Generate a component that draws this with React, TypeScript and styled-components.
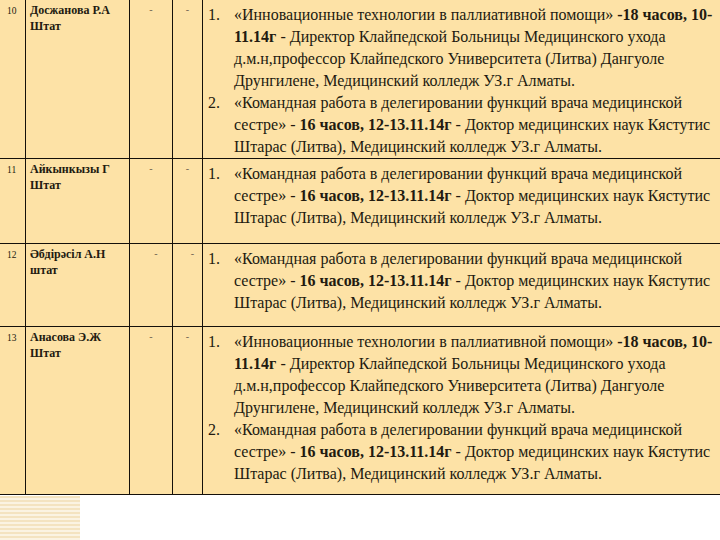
import React from 'react';
import styled, { createGlobalStyle } from 'styled-components';

const Global = createGlobalStyle`
  html, body {
    margin: 0;
    padding: 0;
    background: #ffffff;
  }
  body {
    width: 720px;
    height: 540px;
    overflow: hidden;
  }
`;

const serif = `'Liberation Serif', 'Times New Roman', serif`;

type Part = { text: string; bold?: boolean };
type Course = Part[];

const innovation: Course = [
  { text: '«Инновационные технологии в паллиативной помощи» ' },
  { text: '-18 часов, 10-11.14г', bold: true },
  {
    text:
      ' - Директор Клайпедской Больницы Медицинского ухода д.м.н,профессор Клайпедского Университета (Литва) Дангуоле Друнгилене, Медицинский колледж УЗ.г Алматы.',
  },
];

const teamwork: Course = [
  { text: '«Командная работа в делегировании функций врача медицинской сестре» - ' },
  { text: '16 часов, 12-13.11.14г', bold: true },
  { text: ' - Доктор медицинских наук Кястутис Штарас (Литва), Медицинский колледж УЗ.г Алматы.' },
];

const rows = [
  { num: '10', name: 'Досжанова Р.А', role: 'Штат', height: 158, courses: [innovation, teamwork] },
  { num: '11', name: 'Айкынкызы Г', role: 'Штат', height: 85, courses: [teamwork] },
  { num: '12', name: 'Әбдірәсіл А.Н', role: 'штат', height: 83, courses: [teamwork], shift: true },
  { num: '13', name: 'Анасова Э.Ж', role: 'Штат', height: 168, courses: [innovation, teamwork] },
];

const Page = styled.div`
  width: 720px;
  height: 540px;
  overflow: hidden;
  background: #ffffff;
`;

const Table = styled.table`
  border-collapse: collapse;
  table-layout: fixed;
  width: 740px;
  margin: -1px 0 0 -1px;
  background: #fde2a6;
  font-family: ${serif};
  color: #221a10;
`;

const Row = styled.tr<{ $h: number }>`
  height: ${(p) => p.$h}px;
`;

const Cell = styled.td<{ $w: number }>`
  width: ${(p) => p.$w}px;
  border: 1.5px solid #14100a;
  vertical-align: top;
  padding: 0;
`;

const NumText = styled.div`
  font-size: 9.5px;
  padding: 6px 0 0 7px;
`;

const NameText = styled.div`
  font-size: 12px;
  font-weight: bold;
  line-height: 16px;
  padding: 2px 0 0 4px;
`;

const Dash = styled.div<{ $shift?: boolean }>`
  font-size: 10px;
  color: #6d6250;
  text-align: center;
  padding-top: 4px;
  transform: translateX(${(p) => (p.$shift ? 5 : 0)}px);
`;

const List = styled.ol`
  list-style: none;
  margin: 0;
  padding: 4px 0 0 5px;
  font-size: 16px;
  line-height: 22px;
`;

const Item = styled.li`
  display: grid;
  grid-template-columns: 26px 480px;
`;

const Stripes = styled.div`
  width: 80px;
  height: 44px;
  margin-top: 1px;
  background: repeating-linear-gradient(
    to bottom,
    #f4e3c0 0px,
    #f4e3c0 2px,
    #fbf3e2 2px,
    #fbf3e2 4px
  );
`;

export default function App() {
  return (
    <Page>
      <Global />
      <Table>
        <tbody>
          {rows.map((r) => (
            <Row key={r.num} $h={r.height}>
              <Cell $w={25}>
                <NumText>{r.num}</NumText>
              </Cell>
              <Cell $w={103}>
                <NameText>
                  {r.name}
                  <br />
                  {r.role}
                </NameText>
              </Cell>
              <Cell $w={42}>
                <Dash $shift={r.shift}>-</Dash>
              </Cell>
              <Cell $w={29}>
                <Dash $shift={r.shift}>-</Dash>
              </Cell>
              <Cell $w={541}>
                <List>
                  {r.courses.map((c, i) => (
                    <Item key={i}>
                      <span>{i + 1}.</span>
                      <span>
                        {c.map((p, j) => (p.bold ? <b key={j}>{p.text}</b> : <span key={j}>{p.text}</span>))}
                      </span>
                    </Item>
                  ))}
                </List>
              </Cell>
            </Row>
          ))}
        </tbody>
      </Table>
      <Stripes />
    </Page>
  );
}
